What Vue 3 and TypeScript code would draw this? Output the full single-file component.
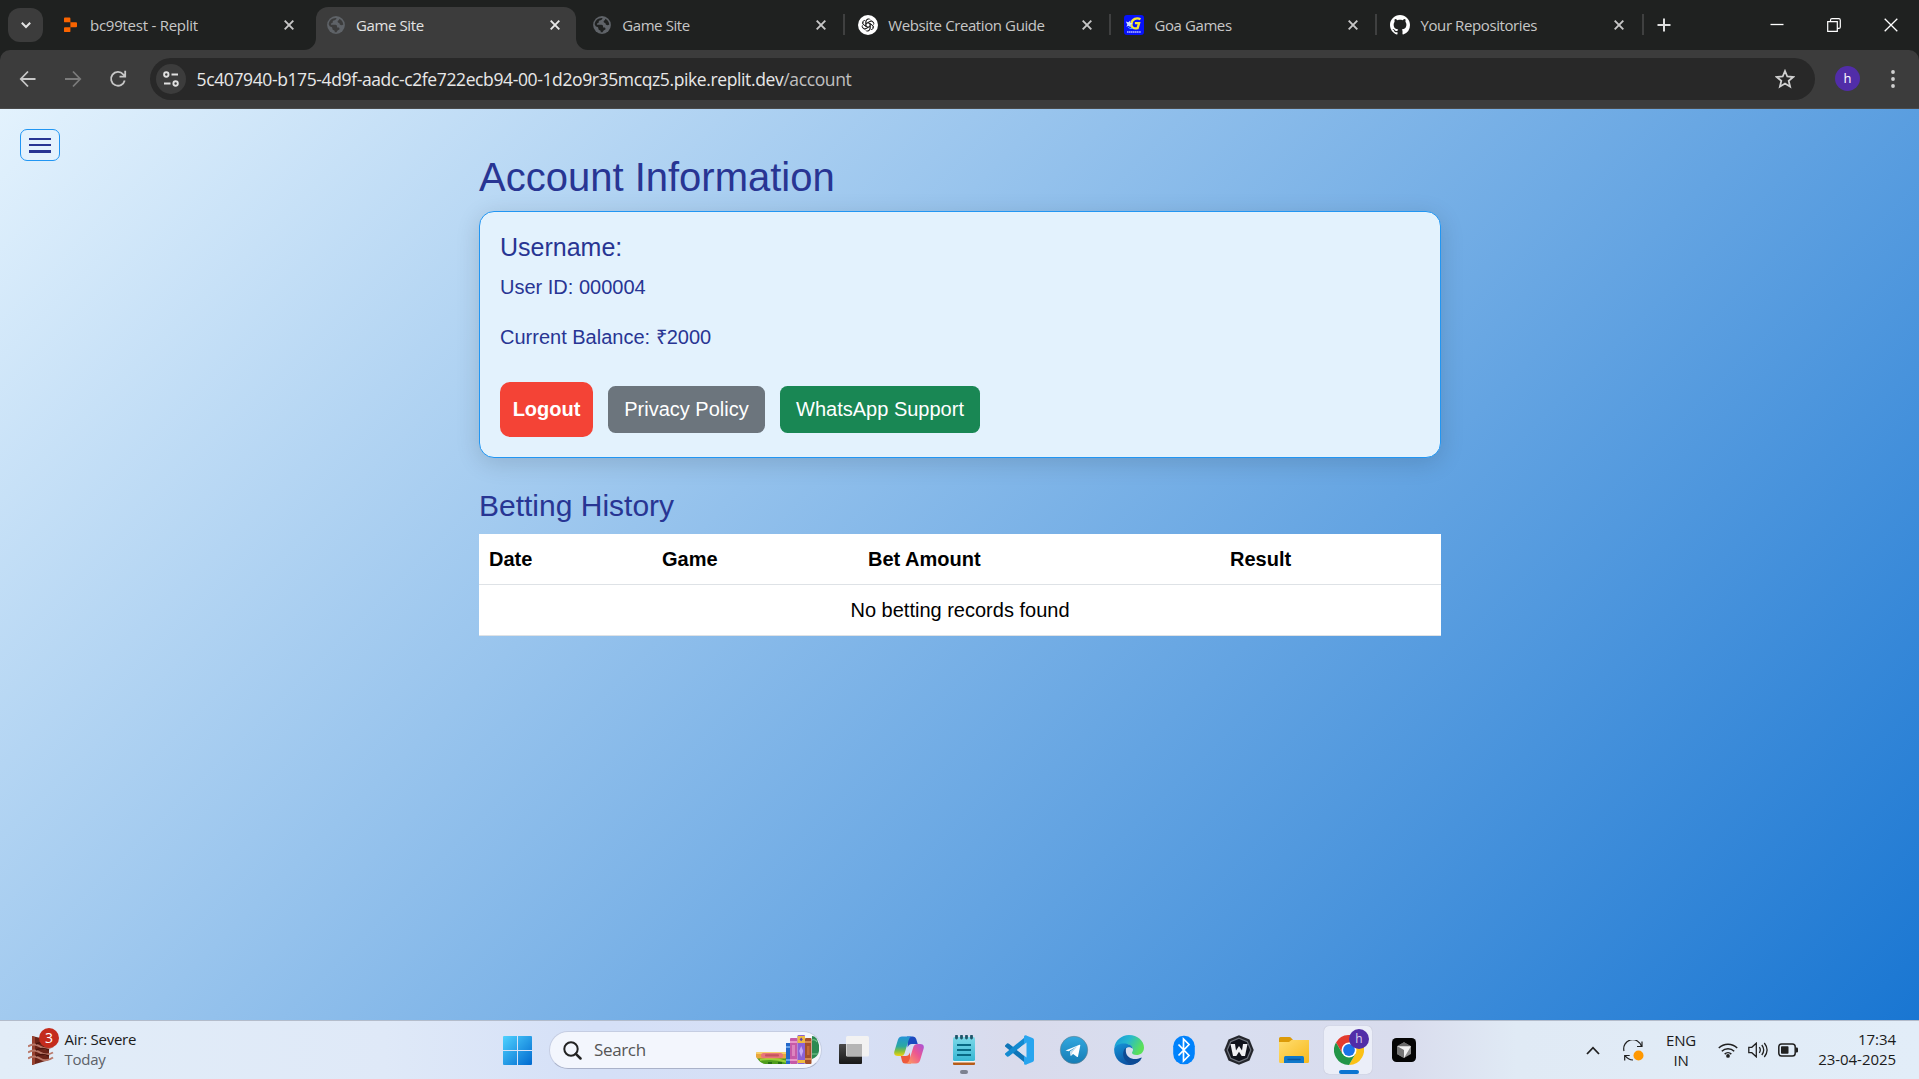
<script setup lang="ts">
interface Tab {
  title: string
  icon: 'replit' | 'globe' | 'gpt' | 'goa' | 'github'
  active?: boolean
  divider?: boolean
}

const tabs: Tab[] = [
  { title: 'bc99test - Replit', icon: 'replit' },
  { title: 'Game Site', icon: 'globe', active: true },
  { title: 'Game Site', icon: 'globe', divider: true },
  { title: 'Website Creation Guide', icon: 'gpt', divider: true },
  { title: 'Goa Games', icon: 'goa', divider: true },
  { title: 'Your Repositories', icon: 'github', divider: true },
]

const columns: string[] = ['Date', 'Game', 'Bet Amount', 'Result']
const petals: number[] = [0, 60, 120, 180, 240, 300]
</script>

<template>
  <div class="screen">
    <header class="tabstrip">
      <div class="tab-search">
        <svg width="12" height="12" viewBox="0 0 12 12"><path d="M1.8 3.8 6 8l4.2-4.2" fill="none" stroke="#e3e3e3" stroke-width="2" /></svg>
      </div>
      <div class="tabs">
        <div v-for="(tab, i) in tabs" :key="i" class="tab" :class="{ active: tab.active, divider: tab.divider }">
          <svg v-if="tab.active" class="foot left" width="12" height="12"><path d="M12 0V12H0A12 12 0 0 0 12 0Z" fill="#3c3c3c" /></svg>
          <svg v-if="tab.active" class="foot right" width="12" height="12"><path d="M0 0V12H12A12 12 0 0 1 0 0Z" fill="#3c3c3c" /></svg>
          <svg v-if="tab.icon === 'replit'" class="favicon" viewBox="0 0 20 20">
            <path d="M4.9 2.500h4.600q.9 0 .9.9v3.900H4.900q-.9 0-.9-.9v-3q0-.9.9-.9ZM10.400 7.300h5.700q.9 0 .9.9v3.100q0 .9-.9.9h-5.700ZM4.900 12.200h5.500v4q0 .9-.9.9H4.900q-.9 0-.9-.9v-3.100q0-.9.9-.9Z" fill="#fa6400" />
          </svg>
          <svg v-else-if="tab.icon === 'globe'" class="favicon" viewBox="0 0 20 20">
            <circle cx="10" cy="10" r="8.900" fill="#5f6368" />
            <path :fill="tab.active ? '#3c3c3c' : '#1f2120'" d="M10.500 3c-.2 1.800-1.500 2.300-2.800 2.400-.9.100-1 1-1 1.800 0 .9-.8 1-1.500 1.100L4.900 9.800h4.500c1.200 0 1.700.9 1.700 1.900v.9h1c1 0 1.400.6 1.400 1.400 0 .8-1 1.100-1.700 1.200-.2.900-1.200 1.200-1.200 2.100a7.400 7.400 0 0 1-1.900 0c.1-1 .1-1.700-.9-2-1.200-.4-1.400-1.200-1.500-2.300-.1-1-1-1.200-2.400-1.600C3.400 10.700 2.700 10 2.700 9.100 3 5.700 6.100 2.700 10.500 3ZM13.300 3.700c2.200 1.100 3.800 3.200 4 5.800-.9.900-2.400.8-3.100.3-.8-.5-.2-1.600-1.300-1.900-1.200-.3-1.700-1.300-.9-2.100.9-.8 1.300-1.100 1.300-2.100Z" />
          </svg>
          <svg v-else-if="tab.icon === 'gpt'" class="favicon" viewBox="0 0 20 20">
            <circle cx="10" cy="10" r="10" fill="#fff" />
            <g fill="none" stroke="#222" stroke-width=".85">
              <path v-for="a in petals" :key="a" :transform="`rotate(${a} 10 10)`" d="M7.900 11.300V6.300a2.500 2.500 0 0 1 4.600-1.300M7.900 8.800l3.900-2.250a2.600 2.600 0 0 1 3.400.9" />
            </g>
          </svg>
          <svg v-else-if="tab.icon === 'goa'" class="favicon" viewBox="0 0 20 20">
            <rect width="20" height="20" rx="3" fill="#0712fa" />
            <path d="M16.500 4.300C12.600 2 8.200 4.200 7.500 8.200c-.7 4 2.200 6 6.100 5l1.500-5h-4.200" fill="none" stroke="#f5e533" stroke-width="2.300" />
            <path d="M1.800 6.500l2.500.7 2-1.700.1 2.400 2.500.6-2.300 1.300-.1 2.500-1.900-1.500-2.200.9.900-2.200Z" fill="#cfe0ff" />
            <path d="M9 13.500q-4 .6-5-1.500" stroke="#46a8ff" fill="none" />
            <path d="M3 17h14" stroke="#b7bdff" stroke-width="1.700" stroke-dasharray="1.500 .4" />
          </svg>
          <svg v-else class="favicon" viewBox="0 0 16 16">
            <path fill="#fff" d="M8 0C3.580 0 0 3.580 0 8c0 3.540 2.290 6.530 5.470 7.590.4.070.550-.17.550-.38 0-.19-.010-.820-.010-1.490-2.010.370-2.530-.490-2.690-.940-.090-.230-.480-.940-.820-1.130-.280-.150-.680-.520-.010-.530.630-.010 1.080.580 1.230.820.720 1.210 1.870.870 2.330.660.070-.520.280-.870.510-1.070-1.780-.200-3.640-.890-3.640-3.950 0-.870.310-1.590.820-2.150-.080-.200-.360-1.020.080-2.120 0 0 .670-.210 2.200.820.640-.180 1.320-.270 2-.270s1.360.090 2 .270c1.530-1.040 2.200-.820 2.200-.820.440 1.100.160 1.920.080 2.120.510.560.820 1.270.820 2.150 0 3.070-1.870 3.750-3.650 3.950.290.250.540.730.540 1.480 0 1.070-.010 1.930-.010 2.200 0 .210.150.460.550.380A8.010 8.010 0 0 0 16 8c0-4.420-3.580-8-8-8Z" />
          </svg>
          <span class="tab-title">{{ tab.title }}</span>
          <svg class="tab-close" width="10" height="10" viewBox="0 0 10 10"><path d="M.7.700 9.300 9.300M9.300.700.700 9.300" stroke-width="1.900" /></svg>
        </div>
      </div>
      <svg class="new-tab" width="14" height="14" viewBox="0 0 14 14"><path d="M7 .5v13M.5 7h13" stroke="#dedede" stroke-width="2" /></svg>
      <div class="window-controls">
        <svg width="14" height="14" viewBox="0 0 14 14"><path d="M.5 6.500h13" stroke="#fff" stroke-width="1.300" /></svg>
        <svg width="14" height="14" viewBox="0 0 14 14"><path d="M.7 3.700h9.600v9.600H.7ZM3.500 3.300V2.200q0-1.500 1.500-1.500h6.800q1.500 0 1.500 1.500v6.700q0 1.500-1.500 1.500h-1" fill="none" stroke="#fff" stroke-width="1.200" /></svg>
        <svg width="14" height="14" viewBox="0 0 14 14"><path d="M.7.700l12.600 12.600M13.300.700.700 13.300" stroke="#fff" stroke-width="1.300" /></svg>
      </div>
    </header>

    <div class="toolbar">
      <svg class="nav back" width="18" height="18" viewBox="0 0 18 18"><path d="M16.500 9H2M9 1.500 1.800 9 9 16.500" fill="none" stroke="#c7c7c7" stroke-width="1.800" /></svg>
      <svg class="nav fwd" width="18" height="18" viewBox="0 0 18 18"><path d="M1 9h15M9 1.500 16.200 9 9 16.500" fill="none" stroke="#7b7b7b" stroke-width="1.800" /></svg>
      <svg class="nav reload" width="18" height="18" viewBox="0 0 18 18"><path d="M15.700 10.500A6.900 6.900 0 1 1 14.200 4.300L16 6.200M16.200.700v5.900h-5.700" fill="none" stroke="#c7c7c7" stroke-width="1.800" /></svg>
      <div class="omnibox">
        <div class="site-info">
          <svg width="18" height="18" viewBox="0 0 18 18" fill="none" stroke="#e0e0e0" stroke-width="1.900"><circle cx="4.300" cy="4.500" r="2.200" /><path d="M9.500 4.500H16M2 13.500h6.500" /><circle cx="13.600" cy="13.500" r="2.200" /></svg>
        </div>
        <div class="url">5c407940-b175-4d9f-aadc-c2fe722ecb94-00-1d2o9r35mcqz5.pike.replit.dev<span class="path">/account</span></div>
        <svg class="star" width="20" height="20" viewBox="0 0 20 20"><path d="M10 2l2.300 5.500 5.900.5-4.500 3.900 1.400 5.800L10 14.600l-5.100 3.100 1.400-5.800L1.800 8l5.900-.5Z" fill="none" stroke="#d0d0d0" stroke-width="1.800" /></svg>
      </div>
      <div class="profile">h</div>
      <svg class="kebab" width="4" height="20" viewBox="0 0 4 20" fill="#d0d0d0"><circle cx="2" cy="3" r="1.900" /><circle cx="2" cy="10" r="1.900" /><circle cx="2" cy="17" r="1.900" /></svg>
    </div>

    <main class="page">
      <button class="menu-button" aria-label="Menu"><i /><i /><i /></button>
      <div class="container">
        <h2>Account Information</h2>
        <section class="card">
          <h5>Username:</h5>
          <p>User ID: 000004</p>
          <p class="balance">Current Balance: ₹2000</p>
          <div class="actions">
            <button class="btn logout">Logout</button>
            <button class="btn privacy">Privacy Policy</button>
            <button class="btn whatsapp">WhatsApp Support</button>
          </div>
        </section>
        <h4>Betting History</h4>
        <table>
          <thead>
            <tr><th v-for="c in columns" :key="c">{{ c }}</th></tr>
          </thead>
          <tbody>
            <tr><td colspan="4">No betting records found</td></tr>
          </tbody>
        </table>
      </div>
    </main>

    <footer class="taskbar">
      <div class="weather">
        <div class="weather-icon">
          <svg width="26" height="32" viewBox="0 0 26 32">
            <path d="M4 2 21 6v20L4 31Z" fill="#6b2418" />
            <path d="M4 2 7 3v27l-3 1Z" fill="#984230" />
            <path d="M0 12.500q6-4 12 0t13 0M0 18.500q6-4 12 0t13 0M0 24.500q6-4 12 0t13-1" fill="none" stroke="#b9796a" stroke-width="2" />
            <path d="M8 16q6-3 13 0M8 22q6-3 13 0M8 10q6-3 13 0" fill="none" stroke="#4b150d" stroke-width="1.500" />
          </svg>
          <span class="weather-badge">3</span>
        </div>
        <div class="weather-text"><div>Air: Severe</div><div class="muted">Today</div></div>
      </div>

      <div class="dock">
        <svg class="start" width="29" height="29" viewBox="0 0 29 29">
          <defs><linearGradient id="win" x1="0" y1="0" x2="29" y2="29" gradientUnits="userSpaceOnUse"><stop offset="0" stop-color="#4fd2ff" /><stop offset="1" stop-color="#0069cf" /></linearGradient></defs>
          <path d="M1 0h13v14H0V1q0-1 1-1ZM15 0h13q1 0 1 1v13H15ZM0 15h14v14H1q-1 0-1-1ZM15 15h14v13q0 1-1 1H15Z" fill="url(#win)" />
        </svg>
        <div class="search">
          <svg class="lens" width="19" height="19" viewBox="0 0 19 19"><circle cx="8" cy="8" r="6.700" fill="none" stroke="#222" stroke-width="2" /><path d="m12.800 12.800 4.700 4.700" stroke="#222" stroke-width="2.500" stroke-linecap="round" /></svg>
          <span class="search-label">Search</span>
          <svg class="books" width="63" height="30" viewBox="0 0 63 30">
            <path d="M1 23h30v6H9q-5-1-8-6Z" fill="#4f9e1c" /><path d="M4 25q13-3 27 2" fill="none" stroke="#9bd13b" stroke-width="2" /><path d="M12 27h4v2h-4zM22 27h4v2h-4z" fill="#276b13" />
            <rect y="17" width="31" height="6.500" rx="2" fill="#e9a73e" /><rect y="17" width="31" height="2" rx="1" fill="#f6cf6b" />
            <rect x="5" y="18" width="22" height="5" rx="2.500" fill="#e8767b" /><rect x="9" y="19.300" width="14" height="2.300" rx="1" fill="#c4565e" />
            <rect x="30" y="8" width="4" height="21" fill="#2468c9" /><path d="M30 12h4M30 25h4" stroke="#7fb6f5" stroke-width="1.500" />
            <rect x="34" y="3" width="7.500" height="26" rx="1" fill="#c65aa8" /><path d="M34 7h7.500M34 25h7.500" stroke="#f3a9d5" stroke-width="1.500" /><rect x="36" y="10" width="3" height="11" fill="#dd84bf" />
            <rect x="41.500" y="0" width="7.500" height="29" rx="1" fill="#8b62d6" /><path d="M41.500 1h7.500v7h-7.500zM41.500 25h7.500v3h-7.500z" fill="#edbb40" /><path d="m45.200 2.500 1.600 1.900-1.600 1.900-1.600-1.900Z" fill="#6042a8" /><path d="m45.200 11 2 5-2 6-2-6Z" fill="#c4a8f5" />
            <rect x="49" y="3" width="6.500" height="26" rx="1" fill="#a4502a" /><path d="M49 7h6.500M49 24h6.500" stroke="#e49a5d" stroke-width="1.500" /><rect x="51" y="11" width="2.500" height="9" fill="#c46a38" />
            <path d="M56 1q5 0 7 9v6q-1 6-7 8Z" fill="#2c8a52" /><path d="M56 5q4-1 5 2M56 19h6" fill="none" stroke="#77c78f" stroke-width="1.200" />
          </svg>
        </div>

        <div class="app">
          <svg width="30" height="30" viewBox="0 0 30 30">
            <defs><linearGradient id="tv" x2="0" y2="1"><stop stop-color="#4a4a4a" /><stop offset="1" stop-color="#181818" /></linearGradient></defs>
            <rect y="9" width="23" height="20" rx="1" fill="url(#tv)" /><rect x="7" y="1" width="23" height="20.500" rx="1.500" fill="#f2f2f2" /><path d="M7.500 9H23v12H7.500Z" fill="#b5b5b5" />
          </svg>
        </div>
        <div class="app">
          <svg width="30" height="30" viewBox="0 0 30 30">
            <defs>
              <linearGradient id="cp1" x1="0" y1="0" x2="0" y2="1"><stop stop-color="#2493d8" /><stop offset=".5" stop-color="#2ba8a2" /><stop offset=".75" stop-color="#86bf3a" /><stop offset="1" stop-color="#f3d20f" /></linearGradient>
              <linearGradient id="cp2" x1="1" y1="0" x2="0" y2="1"><stop stop-color="#a653dc" /><stop offset=".45" stop-color="#ec5691" /><stop offset="1" stop-color="#ffa15a" /></linearGradient>
            </defs>
            <path d="M13 1.500h6q2.500 0 3.200 2.500l1.500 5h-6q-3 0-4 3.500Z" fill="#1b49bf" />
            <path d="M17 28.500h-6q-2.500 0-3-2.500l-1.200-5h5q3 0 4-3.500Z" fill="#ee5a3c" />
            <path d="M8 1.500h9.500q-2 .5-3 4l-4 13q-.8 2.500-3.500 2.500H4q-5 0-3.500-5L4 4.500q1-3 4-3Z" fill="url(#cp1)" />
            <path d="M22 28.500h-9.500q2-.5 3-4l4-13q.8-2.500 3.500-2.500h3q5 0 3.500 5L26 25.500q-1 3-4 3Z" fill="url(#cp2)" />
          </svg>
        </div>
        <div class="app open">
          <svg width="30" height="30" viewBox="0 0 30 30">
            <defs><linearGradient id="np" x2="0" y2="1"><stop stop-color="#7cd8e8" /><stop offset="1" stop-color="#37b7d4" /></linearGradient></defs>
            <path d="M4 25h22v4q0 1-1 1H5q-1 0-1-1Z" fill="#b65b18" /><path d="M4 25h22v2.500H4Z" fill="#f4f4f0" /><rect x="4" y="2" width="22" height="24" rx="1.500" fill="url(#np)" />
            <path d="M8 10h14M8 15h14M8 20h14" stroke="#086984" stroke-width="2" /><path d="M7.500 1v2M12.500 1v2M17.500 1v2M22.500 1v2" stroke="#20566a" stroke-width="2.800" stroke-linecap="round" />
          </svg>
        </div>
        <div class="app">
          <svg width="30" height="30" viewBox="0 0 30 30">
            <path d="M1 10.500 3 8.500q1-.6 2 .2L23 23v6.500L1 11.500Z" fill="#0e75b8" /><path d="M1 19.500 3 21.500q1 .6 2-.2L23 7V.500L1 18.500Z" fill="#138ad0" /><path d="M21.500.2 28.500 3q1.500.6 1.500 2v20q0 1.400-1.500 2l-7 2.800q-1.500.2-1.500-1.500V1.700q0-1.700 1.500-1.500Z" fill="#28a5ef" /><path d="M22.500 7.500v15L13 15Z" fill="#d8e0f0" />
          </svg>
        </div>
        <div class="app">
          <svg width="30" height="30" viewBox="0 0 30 30">
            <defs><linearGradient id="tg" x2="0" y2="1"><stop stop-color="#32a8df" /><stop offset="1" stop-color="#157cb5" /></linearGradient></defs>
            <circle cx="15" cy="15" r="13.700" fill="url(#tg)" stroke="#67808f" stroke-width=".6" /><path d="M6.500 15.500 20.500 9.800q1-.3.800.8l-2.300 10.800q-.3 1-1.200.4l-3.700-2.800-2.300 2-.8-4.300 7.300-5.400-8.600 4.900Z" fill="#fff" /><path d="m11 16.700 7.300-5.400-4.700 5.600-1.800 4.100Z" fill="#c3dceb" />
          </svg>
        </div>
        <div class="app">
          <svg width="30" height="30" viewBox="0 0 30 30">
            <defs>
              <linearGradient id="ed1" x1="0" y1="0" x2="1" y2=".4"><stop stop-color="#1596db" /><stop offset=".5" stop-color="#27b8cf" /><stop offset="1" stop-color="#5be05a" /></linearGradient>
              <linearGradient id="ed2" x1="0" y1="0" x2=".6" y2="1"><stop stop-color="#1595d8" /><stop offset="1" stop-color="#0b4c9d" /></linearGradient>
            </defs>
            <path d="M.3 13C1 5.500 7.500 0 15 0c8.500 0 15 6 15 12.500 0 5-3.600 7.500-7.500 7.500-3.200 0-4.500-1.200-4.500-2.200 0-.8 1-1.300 1-3.300 0-2.500-3-5.500-8-5.500C6 9 1.500 11 .3 13Z" fill="url(#ed1)" />
            <path d="M.2 13.500C1.500 10 5.500 8.600 10 8.600c5 0 8.500 2.400 8.800 5.200-1-1-2.300-1.600-3.800-1.600-3 0-4.500 2.500-4.500 5 0 5 4.500 9 10 9 2.500 0 4.500-.6 6.500-1.700C24.500 28 20 30 15 30 6.500 30-.5 23 .2 13.500Z" fill="url(#ed2)" />
            <path d="M12 12.800c-3.200 2-4.500 9 .3 13.500 1.500 1.500 4 2.700 7 2.900 3.500-1 6.700-3 8.300-6 .2-.6-.2-.8-.7-.5-7 3.500-14.500 0-15-6-.1-1.700 0-2.800.1-3.900Z" fill="#0d4b94" />
          </svg>
        </div>
        <div class="app">
          <svg width="30" height="30" viewBox="0 0 30 30"><rect x="4.200" y=".8" width="21.600" height="28.500" rx="10.500" fill="#0082fc" /><path d="m9.500 9.500 10.500 11-5.500 5.500V4l5.500 5.500-10.500 11" fill="none" stroke="#fff" stroke-width="1.700" /></svg>
        </div>
        <div class="app">
          <svg width="30" height="30" viewBox="0 0 30 30"><path d="M15 .3 25.500 4.600 29.700 15l-4.200 10.400L15 29.700 4.500 25.400.3 15 4.500 4.600Z" fill="#24262c" /><path d="M15 3.200l8.300 3.500L26.800 15l-3.500 8.300L15 26.800l-8.300-3.500L3.200 15l3.500-8.300Z" fill="#11131b" stroke="#6e727b" stroke-width="1.200" /><path d="M6.500 9H11l1 6.500 3-4.500 3 4.500 1-6.500h4.500L21 21h-3.300L15 16.800 12.300 21H9Z" fill="#f0f0f2" /></svg>
        </div>
        <div class="app">
          <svg width="30" height="30" viewBox="0 0 30 30">
            <defs><linearGradient id="fo" x2="1" y2="1"><stop stop-color="#ffdd70" /><stop offset="1" stop-color="#f7b91c" /></linearGradient></defs>
            <path d="M1.500 2h9q1 0 1.500.7L14 5v4H0V3.500Q0 2 1.500 2Z" fill="#dc9a08" /><path d="M0 7h10l2.500-2H30v21.500q0 1.500-1.500 1.500h-27Q0 28 0 26.500Z" fill="url(#fo)" /><path d="M5 28v-5.500q0-1.500 1.500-1.500h17q1.500 0 1.500 1.500V28Z" fill="#0f78ca" /><path d="M9 24.500h12" stroke="#09569e" stroke-width="1.300" stroke-linecap="round" />
          </svg>
        </div>
        <div class="app current">
          <svg width="30" height="30" viewBox="0 0 30 30">
            <path d="M2 7.500A15 15 0 0 1 28 7.500H15L8.500 18.800Z" fill="#e33b2e" /><path d="M28 7.500A15 15 0 0 1 15 30l6.500-11.300L15 7.500Z" fill="#fbc116" /><path d="M2 7.500A15 15 0 0 0 15 30l6.500-11.300H8.500Z" fill="#229547" /><circle cx="15" cy="15" r="7.500" fill="#fff" /><circle cx="15" cy="15" r="5.900" fill="#1a73e8" />
          </svg>
          <span class="chrome-badge">h</span>
        </div>
        <div class="app">
          <svg width="30" height="30" viewBox="0 0 30 30"><rect x="3" y="3" width="24" height="24" rx="4.500" fill="#050505" /><path d="m15 7.200 7 4V19l-7 4-7-4v-7.800Z" fill="#8e8e8e" /><path d="m8 11.200 7-4 7 4-7 1.500Z" fill="#6a6a6a" /><path d="M8 11.200h14L15 23v-8Z" fill="#f2f2f2" /><path d="m8 11.200 7 4V23l-7-4Z" fill="#777" /></svg>
        </div>
      </div>

      <div class="tray">
        <svg class="t-chev" width="14" height="9" viewBox="0 0 14 9"><path d="m1 8 6-6.300L13 8" fill="none" stroke="#202020" stroke-width="1.800" /></svg>
        <svg class="t-sync" width="21" height="21" viewBox="0 0 21 21"><path d="M1 11A9 9 0 0 1 18.500 6.500M19 1.500v5h-5M10 20q-5-.2-8-4.500M1.700 20.500v-5h5" fill="none" stroke="#202020" stroke-width="1.200" /><circle cx="15.500" cy="15.500" r="5" fill="#ff9800" /></svg>
        <div class="lang"><div>ENG</div><div>IN</div></div>
        <svg class="t-wifi" width="20" height="16" viewBox="0 0 20 16"><path d="M.8 6a13 13 0 0 1 18.400 0M3.800 9.200a8.800 8.800 0 0 1 12.400 0M6.700 12.100a4.700 4.700 0 0 1 6.600 0" fill="none" stroke="#202020" stroke-width="1.500" /><circle cx="10" cy="13.900" r="1.900" fill="#202020" /></svg>
        <svg class="t-vol" width="20" height="16" viewBox="0 0 20 16"><path d="M.8 5.300h3L8.300 1.200v13.600L3.800 10.700h-3ZM11.300 5.200q2 2.800 0 5.600M13.800 3q3.800 5 0 10M16.300 1q5.600 7 0 14" fill="none" stroke="#202020" stroke-width="1.300" /></svg>
        <svg class="t-bat" width="20" height="14" viewBox="0 0 20 14"><rect x=".8" y="1" width="16.400" height="12" rx="2.800" fill="none" stroke="#202020" stroke-width="1.500" /><rect x="3" y="3.200" width="7.500" height="7.600" rx=".8" fill="#202020" /><path d="M18 4.500h.8q1.200 0 1.200 1v3q0 1-1.200 1H18Z" fill="#202020" /></svg>
        <div class="clock"><div>17:34</div><div>23-04-2025</div></div>
      </div>
    </footer>
  </div>
</template>

<style>
body {
  margin: 0;
  overflow: hidden;
}
</style>

<style scoped>
.screen {
  width: 1919px;
  height: 1079px;
  display: flex;
  flex-direction: column;
  overflow: hidden;
  background: #1f2120;
  font-family: 'Open Sans', 'Noto Sans', sans-serif;
}
svg {
  display: block;
  flex: none;
}
.tabstrip {
  height: 50px;
  flex: none;
  display: flex;
  align-items: center;
  background: #1f2120;
}
.tab-search {
  width: 35px;
  height: 34px;
  margin-left: 8px;
  border-radius: 12px;
  background: #3c3c3c;
  display: flex;
  align-items: center;
  justify-content: center;
}
.tabs {
  display: flex;
  margin-left: 3px;
  height: 50px;
  flex: none;
}
.tab {
  position: relative;
  width: 266.100px;
  box-sizing: border-box;
  padding-left: 14px;
  padding-right: 18.500px;
  display: flex;
  align-items: center;
  z-index: 1;
}
.tab > * {
  position: relative;
}
.tab.active::before {
  content: '';
  position: absolute;
  left: 3.500px;
  right: 2.500px;
  top: 7px;
  bottom: 0;
  background: #3c3c3c;
  border-radius: 12px 12px 0 0;
}
.tab.divider::after {
  content: '';
  position: absolute;
  right: -1px;
  top: 14px;
  width: 2px;
  height: 21px;
  background: #3f4040;
}
.tab > .foot {
  position: absolute;
  bottom: 0;
}
.foot.left {
  left: -8.500px;
}
.foot.right {
  right: -9.500px;
}
.favicon {
  width: 20px;
  height: 20px;
}
.tab-title {
  flex: 1;
  margin-left: 10px;
  font-size: 15px;
  letter-spacing: -0.400px;
  line-height: 20px;
  color: #c7c7c7;
  white-space: nowrap;
}
.tab:first-child .tab-title {
  letter-spacing: -0.250px;
}
.active .tab-title {
  color: #e3e3e3;
}
.tab-close {
  stroke: #c7c7c7;
}
.active .tab-close {
  stroke: #e8e8e8;
}
.new-tab {
  margin-left: 14.500px;
}
.window-controls {
  display: flex;
  gap: 43px;
  margin-left: auto;
  margin-right: 21px;
}
.toolbar {
  height: 59px;
  flex: none;
  box-sizing: border-box;
  padding-bottom: 1px;
  display: flex;
  align-items: center;
  background: #3c3c3c;
  border-bottom: 1px solid #4a4a4a;
  border-radius: 10px 10px 0 0;
}
.back {
  margin-left: 19px;
}
.fwd {
  margin-left: 27px;
}
.reload {
  margin-left: 27px;
}
.omnibox {
  width: 1665px;
  height: 42px;
  margin-left: 23px;
  border-radius: 21px;
  background: #282828;
  display: flex;
  align-items: center;
  flex: none;
}
.site-info {
  width: 30px;
  height: 30px;
  margin-left: 6px;
  border-radius: 50%;
  background: #3c3c3c;
  display: flex;
  align-items: center;
  justify-content: center;
}
.url {
  margin-left: 10.500px;
  font-size: 17.500px;
  letter-spacing: -0.380px;
  line-height: 24px;
  color: #e8e8e8;
  white-space: nowrap;
}
.path {
  color: #c0c0c0;
}
.star {
  margin-left: auto;
  margin-right: 20px;
}
.profile {
  width: 25px;
  height: 25px;
  margin-left: 20px;
  border-radius: 50%;
  background: #512da8;
  color: #fff;
  font-size: 13px;
  line-height: 24px;
  text-align: center;
}
.kebab {
  margin-left: 30.500px;
}

.page {
  height: 911px;
  flex: none;
  position: relative;
  background: linear-gradient(135deg, #e3f2fd, #1976d2);
  font-family: 'Liberation Sans', Arial, sans-serif;
  color: #283593;
}
.menu-button {
  position: absolute;
  left: 20px;
  top: 20px;
  width: 40px;
  height: 32px;
  box-sizing: border-box;
  padding: 0 8px;
  border: 1px solid #2196f3;
  border-radius: 7px;
  background: #e3f2fd;
  display: flex;
  flex-direction: column;
  justify-content: center;
  gap: 4px;
}
.menu-button i {
  height: 2px;
  background: #283593;
}
.menu-button i:last-child {
  height: 3px;
}
.container {
  width: 962px;
  margin-left: 479px;
  padding-top: 44px;
}
h2,
h4,
h5,
p {
  margin: 0;
  font-weight: 400;
}
h2 {
  font-size: 40px;
  line-height: 48px;
  margin-bottom: 10px;
}
.card {
  box-sizing: border-box;
  height: 247px;
  padding: 20px;
  border: 1px solid #2196f3;
  border-radius: 15px;
  background: #e3f2fd;
  box-shadow: 0 5px 25px rgba(0, 0, 0, 0.14);
}
h5 {
  font-size: 25px;
  line-height: 30px;
  margin-bottom: 10px;
}
p {
  font-size: 20px;
  line-height: 30px;
  margin-bottom: 20px;
}
.balance {
  margin-bottom: 30px;
}
.actions {
  display: flex;
  align-items: center;
  gap: 15px;
}
.btn {
  border: 0;
  font: 400 20px/30px 'Liberation Sans', Arial, sans-serif;
  color: #fff;
  padding: 0 0 2px;
  white-space: nowrap;
}
.logout {
  width: 93px;
  height: 55px;
  border-radius: 10px;
  background: #f44336;
  font-weight: 700;
}
.privacy {
  width: 157px;
  height: 47px;
  border-radius: 7.500px;
  background: #6c757d;
}
.whatsapp {
  width: 200px;
  height: 47px;
  border-radius: 7.500px;
  background: #198754;
}
h4 {
  font-size: 30px;
  line-height: 36px;
  margin: 30px 0 10px;
}
table {
  width: 100%;
  table-layout: fixed;
  border-collapse: separate;
  border-spacing: 0;
  background: #fff;
  color: #000;
  font-size: 20px;
  line-height: 30px;
}
th,
td {
  padding: 10px;
  border-bottom: 1px solid #dee2e6;
  text-align: left;
}
th:nth-child(1) {
  width: 153px;
}
th:nth-child(2) {
  width: 186px;
}
th:nth-child(3) {
  width: 342px;
}
td {
  text-align: center;
}

.taskbar {
  position: relative;
  height: 59px;
  flex: none;
  box-sizing: border-box;
  border-top: 1px solid #b3bccb;
  background: linear-gradient(90deg, #e2edf8 0%, #dfe9f8 20%, #d5e0f7 31%, #d6dff5 45%, #d9dbec 53%, #d8def0 63%, #d9dced 73%, #e0eaf5 79%, #e2edf8 100%);
  display: flex;
  align-items: center;
  font-size: 15px;
  line-height: 20px;
  color: #1b1b1b;
}
.weather {
  width: 503px;
  display: flex;
  align-items: center;
}
.weather-icon {
  position: relative;
  margin-left: 28px;
}
.weather-badge {
  position: absolute;
  left: 11px;
  top: -6px;
  width: 20px;
  height: 20px;
  border-radius: 50%;
  background: #c42b1c;
  color: #fff;
  font-size: 14px;
  line-height: 20px;
  text-align: center;
}
.weather-text {
  margin-left: 10.500px;
  padding-bottom: 2px;
  letter-spacing: -0.250px;
}
.muted {
  color: #5d6269;
}
.dock {
  display: flex;
  align-items: center;
  height: 58px;
}
.search {
  width: 273px;
  height: 38px;
  box-sizing: border-box;
  margin-left: 17px;
  margin-right: 4px;
  padding: 0 2px 0 13px;
  border: 1px solid #c5cde2;
  border-bottom-color: #aab2c9;
  border-radius: 19px;
  background: #f3f6fd;
  display: flex;
  align-items: center;
}
.search-label {
  margin-left: 12px;
  font-size: 17px;
  letter-spacing: -0.350px;
  color: #555;
}
.books {
  margin-left: auto;
}
.app {
  position: relative;
  width: 55px;
  height: 58px;
  display: flex;
  align-items: center;
  justify-content: center;
}
.app > svg {
  position: relative;
}
.app.open::after,
.app.current::after {
  content: '';
  position: absolute;
  bottom: 5px;
  left: 50%;
  width: 8px;
  height: 4px;
  margin-left: -4px;
  border-radius: 2px;
  background: #7c8190;
}
.app.current::after {
  width: 20px;
  margin-left: -10px;
  background: #0b75d1;
}
.app.current::before {
  content: '';
  position: absolute;
  left: 3px;
  top: 5px;
  width: 48px;
  height: 48px;
  border-radius: 5px;
  background: #ebeef8;
  box-shadow: 0 0 1px #aab;
}
.chrome-badge {
  position: absolute;
  left: 28px;
  top: 8px;
  width: 20px;
  height: 20px;
  border-radius: 50%;
  background: #512da8;
  color: #d9d0ee;
  font-size: 12px;
  line-height: 20px;
  text-align: center;
}
.tray {
  flex: 1;
  display: flex;
  align-items: center;
  justify-content: flex-end;
  padding-right: 23px;
}
.t-sync {
  margin-left: 23px;
}
.lang {
  width: 34px;
  margin-left: 20px;
  text-align: center;
  letter-spacing: -0.200px;
}
.t-wifi {
  margin-left: 20px;
}
.t-vol,
.t-bat {
  margin-left: 10px;
}
.clock {
  width: 80px;
  margin-left: 18px;
  padding-bottom: 2px;
  text-align: right;
  white-space: nowrap;
  letter-spacing: -0.050px;
}
</style>
